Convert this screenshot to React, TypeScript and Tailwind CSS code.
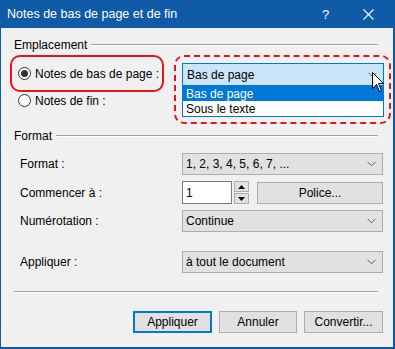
import { FC, ReactNode } from 'react'

const Chevron: FC = () => (
	<svg width="9" height="6" viewBox="0 0 9 6" className="shrink-0">
		<path d="M0.5 0.8 L4.5 4.8 L8.5 0.8" fill="none" stroke="#5a5a5a" strokeWidth="1" />
	</svg>
)

const GroupTitle: FC<{ label: string }> = ({ label }) => (
	<div className="flex items-center h-[14px] ml-[4px] mr-[15px] gap-[4px]">
		<span>{label}</span>
		<div className="flex-1 border-t border-t-[#a0a0a0] border-b border-b-white" />
	</div>
)

const Radio: FC<{ checked?: boolean }> = ({ checked }) => (
	<span className="w-[13px] h-[13px] rounded-full border border-[#333] bg-white grid place-items-center shrink-0">
		{checked && <span className="w-[7px] h-[7px] rounded-full bg-[#333]" />}
	</span>
)

const Combo: FC<{ value: string }> = ({ value }) => (
	<div className="w-[201px] h-[22px] bg-[#e1e1e1] border border-[#adadad] flex items-center justify-between pl-[3px] pr-[6px]">
		<span>{value}</span>
		<Chevron />
	</div>
)

const Row: FC<{ label: string; children: ReactNode; className?: string }> = ({ label, children, className }) => (
	<div className={`flex items-center ml-[10px] ${className ?? ''}`}>
		<span className="w-[162px]">{label}</span>
		{children}
	</div>
)

const Btn: FC<{ label: string; primary?: boolean; className?: string }> = ({ label, primary, className }) => (
	<div
		className={`h-[22px] bg-[#e1e1e1] flex items-center justify-center ${
			primary ? 'border-2 border-[#0078d7]' : 'border border-[#adadad]'
		} ${className ?? ''}`}
	>
		{label}
	</div>
)

export default function App() {
	return (
		<div className="w-[395px] h-[349px] bg-[#f0f0f0] border-l border-r-2 border-b-2 border-[#0f5ba7] flex flex-col text-[12px] text-black font-['Liberation_Sans',Arial,sans-serif] leading-none">
			{/* title bar */}
			<div className="h-[28px] bg-[#0f5ba7] text-white flex items-center pl-[6px] shrink-0">
				<span className="text-[12.5px]">Notes de bas de page et de fin</span>
				<span className="ml-auto text-[13px] w-[10px]">?</span>
				<svg width="11" height="11" viewBox="0 0 11 11" className="ml-[31px] mr-[19px]">
					<path d="M0.5 0.5 L10.5 10.5 M10.5 0.5 L0.5 10.5" stroke="white" strokeWidth="1.1" />
				</svg>
			</div>

			<div className="flex flex-col pl-[9px]">
				<div className="mt-[10px]">
					<GroupTitle label="Emplacement" />
				</div>

				<div className="flex items-start mt-[3px]">
					<div className="w-[154px] flex flex-col">
						<div className="h-[37px] border-2 border-[#e8141c] rounded-[10px] flex items-center pl-[6px] gap-[4px]">
							<Radio checked />
							<span>Notes de bas de page :</span>
						</div>
						<div className="h-[13px] mt-[2px] flex items-center pl-[8px] gap-[4px]">
							<Radio />
							<span>Notes de fin :</span>
						</div>
					</div>

					<div className="ml-[10px] w-[217px] h-[69px] border-2 border-dashed border-[#e8141c] rounded-[10px] pt-[6px] pl-[6px]">
						<div className="relative w-[202px]">
							<div className="h-[23px] border border-[#0078d7] bg-[#cce4f7] flex items-center justify-between pl-[4px] pr-[6px]">
								<span>Bas de page</span>
								<Chevron />
							</div>
							<div className="border border-t-0 border-[#0078d7] bg-white">
								<div className="h-[15px] bg-[#0078d7] text-white flex items-center pl-[3px]">Bas de page</div>
								<div className="h-[15px] flex items-center pl-[3px]">Sous le texte</div>
							</div>
							<svg width="13" height="21" viewBox="0 0 13 21" className="absolute left-[190px] top-[9px]">
								<path
									d="M0.5 0.5 L0.5 16.5 L4.5 12.5 L7.5 19.5 L9.5 18.5 L6.5 11.5 L11.5 11.5 Z"
									fill="white"
									stroke="black"
									strokeWidth="1"
									strokeLinejoin="miter"
								/>
							</svg>
						</div>
					</div>
				</div>

				<div className="mt-[5px]">
					<GroupTitle label="Format" />
				</div>

				<Row label="Format :" className="mt-[10px]">
					<Combo value="1, 2, 3, 4, 5, 6, 7, ..." />
				</Row>

				<Row label="Commencer à :" className="mt-[6px]">
					<div className="w-[50px] h-[23px] border border-[#7a7a7a] bg-white flex items-center pl-[3px]">1</div>
					<div className="ml-[2px] w-[15px] flex flex-col gap-[1px]">
						<div className="h-[11px] bg-[#e1e1e1] border border-[#adadad] grid place-items-center">
							<svg width="7" height="4" viewBox="0 0 7 4">
								<path d="M0 4 L3.5 0 L7 4 Z" fill="#000" />
							</svg>
						</div>
						<div className="h-[11px] bg-[#e1e1e1] border border-[#adadad] grid place-items-center">
							<svg width="7" height="4" viewBox="0 0 7 4">
								<path d="M0 0 L3.5 4 L7 0 Z" fill="#000" />
							</svg>
						</div>
					</div>
					<Btn label="Police..." className="ml-[8px] w-[126px]" />
				</Row>

				<Row label="Numérotation :" className="mt-[6px]">
					<Combo value="Continue" />
				</Row>

				<Row label="Appliquer :" className="mt-[19px]">
					<Combo value="à tout le document" />
				</Row>

				<div className="mt-[18px] ml-[4px] mr-[15px] border-t border-t-[#a0a0a0] border-b border-b-white" />

				<div className="mt-[18px] flex justify-end mr-[10px] gap-[7px]">
					<Btn label="Appliquer" primary className="w-[79px]" />
					<Btn label="Annuler" className="w-[78px]" />
					<Btn label="Convertir..." className="w-[79px]" />
				</div>
			</div>
		</div>
	)
}
